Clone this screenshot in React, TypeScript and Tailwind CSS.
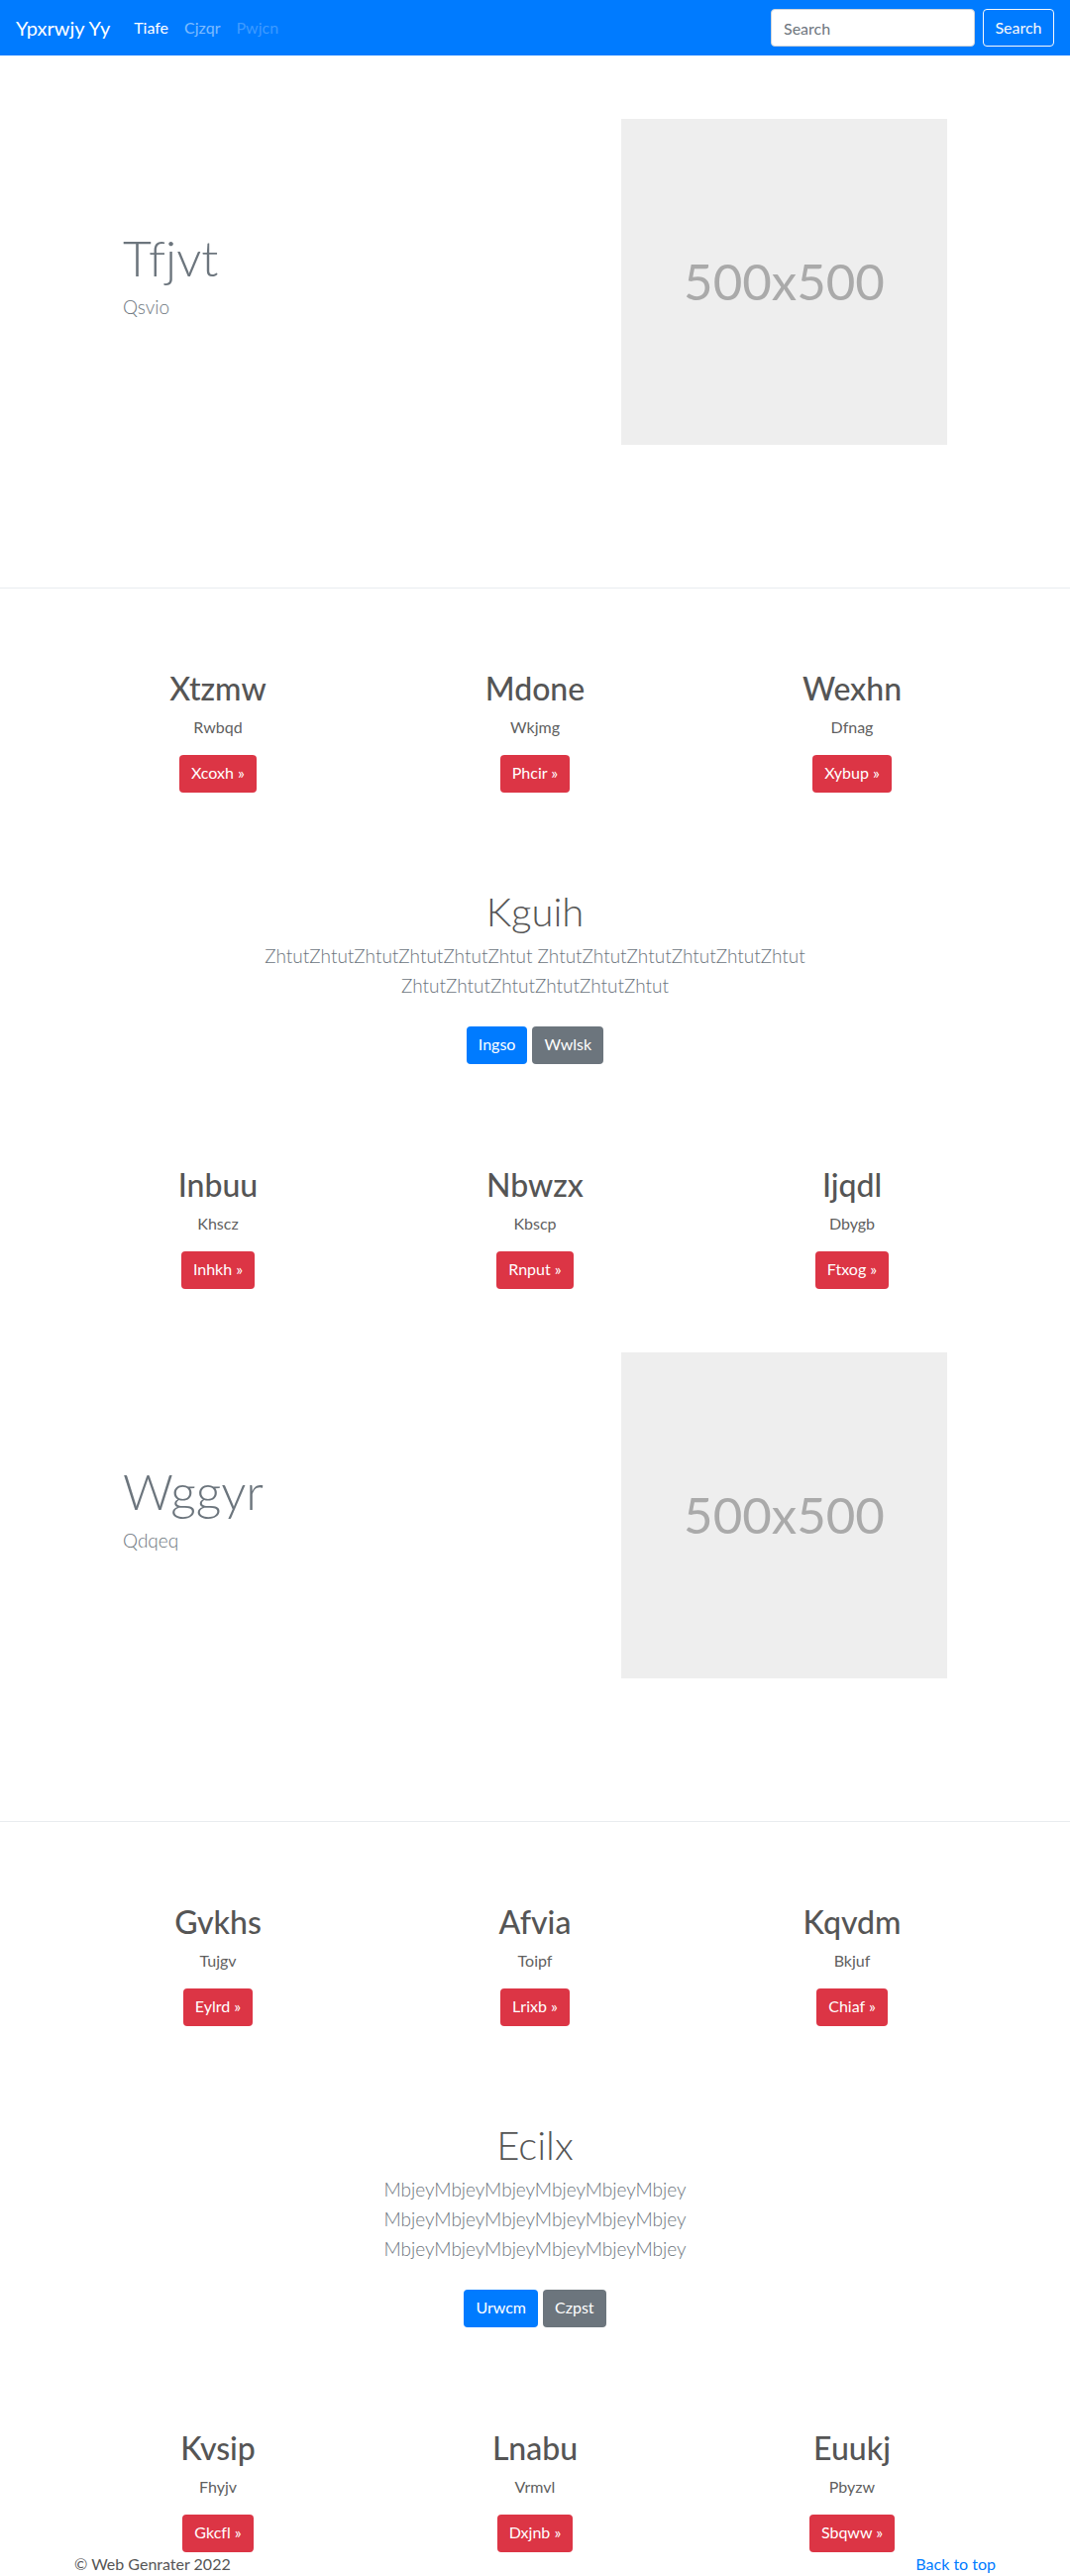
import React from "react";

const font = { fontFamily: '"Segoe UI", Lato, "Noto Sans", sans-serif' };

type Feature = { title: string; sub: string; btn: string };

const FeatureRow = ({ items, pt }: { items: Feature[]; pt: string }) => (
  <div className={`w-[960px] mx-auto px-[15px] ${pt}`}>
    <div className="grid grid-cols-3 gap-[30px] text-center">
      {items.map((f) => (
        <div key={f.title}>
          <h2 className="text-[32px] leading-[38px] font-medium text-[#555] mb-2">
            {f.title}
          </h2>
          <p className="text-[16px] leading-[24px] text-[#5f5f5f] mb-4">{f.sub}</p>
          <p>
            <a className="inline-block h-[38px] px-3 py-[6px] text-[16px] leading-[24px] text-white bg-[#dc3545] rounded-[4px]">
              {f.btn} &raquo;
            </a>
          </p>
        </div>
      ))}
    </div>
  </div>
);

const Hero = ({ title, sub, pt }: { title: string; sub: string; pt: string }) => (
  <section className={`${pt} pb-[144px] border-b border-[#e9ecef]`}>
    <div className="w-[960px] mx-auto px-[15px] grid grid-cols-2 gap-[30px] items-center">
      <div className="pl-[49px]">
        <h1 className="text-[50px] leading-[62px] font-light text-[#6c757d] mb-1">{title}</h1>
        <p className="text-[19px] leading-[30px] font-light text-[#6c757d] mb-4">{sub}</p>
      </div>
      <div className="flex justify-end pr-[49px]">
        <div className="w-[329px] h-[329px] bg-[#eeeeee] flex items-center justify-center text-[51px] text-[#aaaaaa]">
          500x500
        </div>
      </div>
    </div>
  </section>
);

const Jumbo = ({
  title,
  text,
  primary,
  secondary,
}: {
  title: string;
  text: string;
  primary: string;
  secondary: string;
}) => (
  <section className="pt-[96px] text-center">
    <div className="w-[640px] mx-auto px-[15px]">
      <h1 className="text-[40px] leading-[48px] font-light text-[#555] mb-[6px]">{title}</h1>
      <p className="text-[19px] leading-[30px] font-light text-[#6c757d] mb-[26px]">{text}</p>
      <div className="flex justify-center gap-[5px]">
        <a className="h-[38px] px-3 py-[6px] text-[16px] leading-[24px] text-white bg-[#007bff] rounded-[4px]">
          {primary}
        </a>
        <a className="h-[38px] px-3 py-[6px] text-[16px] leading-[24px] text-white bg-[#6c757d] rounded-[4px]">
          {secondary}
        </a>
      </div>
    </div>
  </section>
);

export default function App() {
  return (
    <div
      className="bg-white min-h-[2600px] text-[#212529] [font-variant-ligatures:none]"
      style={font}
    >
      <nav className="h-[56px] bg-[#007bff] px-4 flex items-center">
        <a className="text-[20px] leading-[30px] text-white mr-4">Ypxrwjy Yy</a>
        <ul className="flex text-[16px] leading-[24px]">
          <li className="px-2 text-white">Tiafe</li>
          <li className="px-2 text-white/50">Cjzqr</li>
          <li className="px-2 text-white/25">Pwjcn</li>
        </ul>
        <div className="ml-auto flex items-center">
          <input
            placeholder="Search"
            className="w-[206px] h-[38px] px-3 text-[16px] bg-white border border-[#ced4da] rounded-[4px] placeholder:text-[#6c757d] outline-none"
          />
          <button className="ml-2 h-[38px] w-[72px] text-[16px] text-[#f8f9fa] border border-[#f8f9fa] rounded-[4px]">
            Search
          </button>
        </div>
      </nav>

      <Hero title="Tfjvt" sub="Qsvio" pt="pt-[64px]" />

      <FeatureRow
        pt="pt-[82px]"
        items={[
          { title: "Xtzmw", sub: "Rwbqd", btn: "Xcoxh" },
          { title: "Mdone", sub: "Wkjmg", btn: "Phcir" },
          { title: "Wexhn", sub: "Dfnag", btn: "Xybup" },
        ]}
      />

      <Jumbo
        title="Kguih"
        text="ZhtutZhtutZhtutZhtutZhtutZhtut ZhtutZhtutZhtutZhtutZhtutZhtut ZhtutZhtutZhtutZhtutZhtutZhtut"
        primary="Ingso"
        secondary="Wwlsk"
      />

      <FeatureRow
        pt="pt-[103px]"
        items={[
          { title: "Inbuu", sub: "Khscz", btn: "Inhkh" },
          { title: "Nbwzx", sub: "Kbscp", btn: "Rnput" },
          { title: "Ijqdl", sub: "Dbygb", btn: "Ftxog" },
        ]}
      />

      <Hero title="Wggyr" sub="Qdqeq" pt="pt-[64px]" />

      <FeatureRow
        pt="pt-[82px]"
        items={[
          { title: "Gvkhs", sub: "Tujgv", btn: "Eylrd" },
          { title: "Afvia", sub: "Toipf", btn: "Lrixb" },
          { title: "Kqvdm", sub: "Bkjuf", btn: "Chiaf" },
        ]}
      />

      <Jumbo
        title="Ecilx"
        text="MbjeyMbjeyMbjeyMbjeyMbjeyMbjey MbjeyMbjeyMbjeyMbjeyMbjeyMbjey MbjeyMbjeyMbjeyMbjeyMbjeyMbjey"
        primary="Urwcm"
        secondary="Czpst"
      />

      <FeatureRow
        pt="pt-[103px]"
        items={[
          { title: "Kvsip", sub: "Fhyjv", btn: "Gkcfl" },
          { title: "Lnabu", sub: "Vrmvl", btn: "Dxjnb" },
          { title: "Euukj", sub: "Pbyzw", btn: "Sbqww" },
        ]}
      />

      <footer className="w-[960px] mx-auto px-[15px] flex justify-between text-[16px] leading-[24px]">
        <p className="text-[#555]">&copy; Web Genrater 2022</p>
        <a className="text-[#007bff]">Back to top</a>
      </footer>
    </div>
  );
}
